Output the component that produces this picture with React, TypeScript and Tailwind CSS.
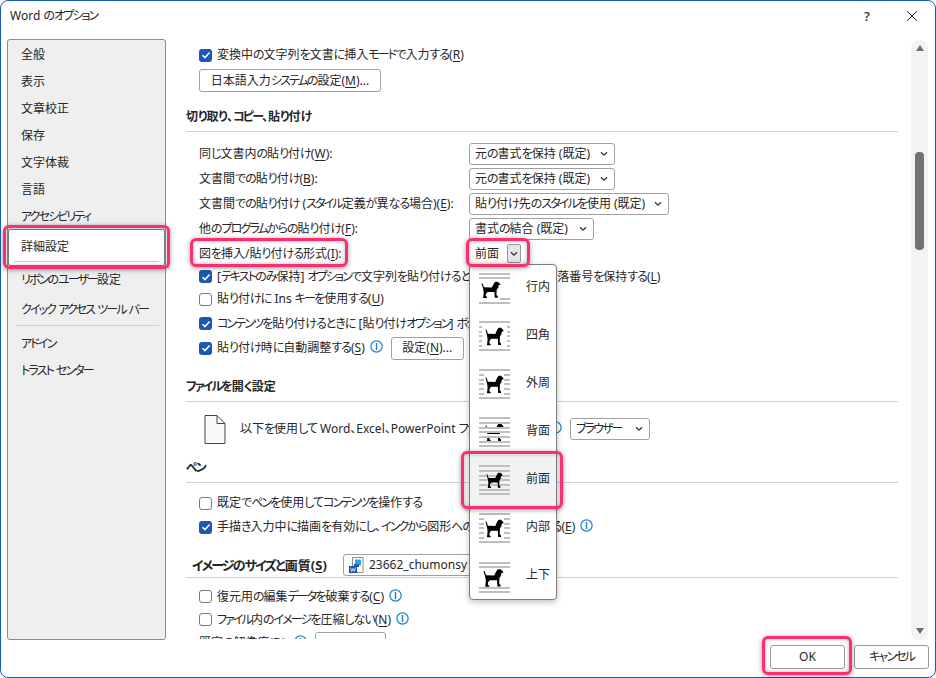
import React from "react";

const U = ({ children }: { children: React.ReactNode }) => <span className="underline underline-offset-2">{children}</span>;

function kern(node: React.ReactNode): React.ReactNode {
  return React.Children.map(node, (c) => {
    if (typeof c === "string") {
      return c.split(/([\u3040-\u309F]+|[\u30A0-\u30FF]+)/).map((part, i) => {
        if (!part) return null;
        if (/^[\u3040-\u309F]/.test(part)) return <span key={i} className="tracking-[-1px]">{part}</span>;
        if (/^[\u30A0-\u30FF]/.test(part)) return <span key={i} className="tracking-[-1.9px]">{part}</span>;
        return <React.Fragment key={i}>{part}</React.Fragment>;
      });
    }
    if (React.isValidElement(c) && c.type === React.Fragment) {
      return kern((c.props as { children?: React.ReactNode }).children);
    }
    return c;
  });
}

const J = ({ children }: { children: React.ReactNode }) => <>{kern(children)}</>;

const Check = ({ on }: { on?: boolean }) =>
  on ? (
    <span className="w-[13px] h-[13px] shrink-0 rounded-[3px] bg-[#1b57b5] flex items-center justify-center">
      <svg width="10" height="10" viewBox="0 0 10 10" fill="none" stroke="#fff" strokeWidth="1.5"><path d="M1.5 5.2 L4 7.6 L8.6 2.6" /></svg>
    </span>
  ) : (
    <span className="w-[13px] h-[13px] shrink-0 rounded-[3px] border border-[#7a7a7a] bg-white" />
  );

const Info = () => (
  <svg width="13" height="13" viewBox="0 0 13 13" fill="none" className="shrink-0 -mt-[3px]">
    <circle cx="6.5" cy="6.5" r="5.6" stroke="#1c7fd1" strokeWidth="1.2" />
    <rect x="5.8" y="3" width="1.4" height="7" fill="#1c7fd1" />
  </svg>
);

const Chevron = () => (
  <svg width="8" height="6" viewBox="0 0 8 6" fill="none" stroke="#333" strokeWidth="1.3"><path d="M1 1.2 L4 4.2 L7 1.2" /></svg>
);

const Select = ({ children, w }: { children: React.ReactNode; w: string }) => (
  <div className={`${w} h-[22px] border border-[#a0a0a0] rounded-[3px] bg-white flex items-center justify-between pl-[5px] pr-[6px] shrink-0`}>
    <span className="whitespace-nowrap"><J>{children}</J></span>
    <Chevron />
  </div>
);

const Btn = ({ children, w }: { children: React.ReactNode; w: string }) => (
  <div className={`${w} h-[23px] border border-[#a0a0a0] rounded-[3px] bg-white flex items-center justify-center shrink-0 whitespace-nowrap`}><span><J>{children}</J></span></div>
);

const Heading = ({ children }: { children: React.ReactNode }) => (
  <div className="h-[28px] border-b border-[#d2d2d2] font-bold flex items-center pb-[2px] whitespace-nowrap"><span><J>{children}</J></span></div>
);

const CheckRow = ({ on, h, children }: { on?: boolean; h: string; children: React.ReactNode }) => (
  <div className={`${h} flex items-center pl-[13px] gap-[5px] whitespace-nowrap`}>
    <Check on={on} />
    <span><J>{children}</J></span>
  </div>
);

const LabelRow = ({ label, h = "h-[25px]", children }: { label: React.ReactNode; h?: string; children?: React.ReactNode }) => (
  <div className={`${h} flex items-center pl-[13px] whitespace-nowrap`}>
    <span className="w-[270px] shrink-0"><J>{label}</J></span>
    {children}
  </div>
);

const DOG = "M0.6 2.5 L1.8 2.5 L3.5 6.6 L12.5 6.8 L14.8 2.8 L16.6 0.8 L19.2 0.8 L21.2 2 L22.8 4 L20.4 4.6 L20 7.2 L18.2 9.4 L18 14.8 L19.6 16.4 L19.6 17.6 L16 17.6 L15.6 11.6 L7.6 11.6 L5.6 13.6 L5.4 15.6 L7 17.2 L7 17.8 L2.4 17.8 L3.2 12 L2.4 8 Z";

const Lines = ({ ys, gap }: { ys: number[]; gap?: (y: number) => [number, number] | null }) => (
  <>
    {ys.map((y) => {
      const g = gap ? gap(y) : null;
      return g ? (
        <g key={y} fill="#bfbfbf">
          <rect x="0" y={y} width={g[0]} height="2" />
          <rect x={g[1]} y={y} width={31 - g[1]} height="2" />
        </g>
      ) : (
        <rect key={y} x="0" y={y} width="31" height="2" fill="#bfbfbf" />
      );
    })}
  </>
);

const FULL = [0, 5, 10, 14, 19, 24, 28];

const WrapIcon = ({ kind }: { kind: string }) => (
  <svg width="31" height="32" viewBox="0 0 31 32" className="shrink-0">
    {kind === "inline" && (
      <>
        <Lines ys={[0, 4, 25, 29]} gap={(y) => (y === 25 ? [0, 21] : null)} />
        <path d={DOG} transform="translate(2 8) scale(0.86 0.95)" fill="#000" />
      </>
    )}
    {kind === "square" && (
      <>
        <Lines ys={FULL} gap={(y) => (y > 2 && y < 26 ? [3, 28] : null)} />
        <path d={DOG} transform="translate(6 6) scale(0.82 1.02)" fill="#000" />
      </>
    )}
    {kind === "tight" && (
      <>
        <Lines ys={FULL} gap={(y) => (y > 2 && y < 26 ? [5, 25] : null)} />
        <path d={DOG} transform="translate(6 6) scale(0.82 1.02)" fill="#000" />
      </>
    )}
    {kind === "behind" && (
      <>
        <path d={DOG} transform="translate(6 6) scale(0.82 1.02)" fill="#000" />
        <rect x="0" y="12" width="31" height="2" fill="#fff" />
        <rect x="0" y="17" width="31" height="2" fill="#fff" />
        <Lines ys={FULL} />
      </>
    )}
    {kind === "front" && (
      <>
        <Lines ys={FULL} />
        <path d={DOG} transform="translate(7 7) scale(0.74 0.9)" fill="#000" stroke="#f2f2f2" strokeWidth="1.2" paintOrder="stroke" />
      </>
    )}
    {kind === "topbottom" && (
      <>
        <Lines ys={[1, 5, 26, 30]} />
        <path d={DOG} transform="translate(4 7.5) scale(0.9 1.02)" fill="#000" />
      </>
    )}
  </svg>
);

const MENU: { kind: string; label: string; active?: boolean }[] = [
  { kind: "inline", label: "行内" },
  { kind: "square", label: "四角" },
  { kind: "tight", label: "外周" },
  { kind: "behind", label: "背面" },
  { kind: "front", label: "前面", active: true },
  { kind: "tight", label: "内部" },
  { kind: "topbottom", label: "上下" },
];

const Callout = ({ cls }: { cls: string }) => (
  <div className={`absolute ${cls} border-[3px] border-[#fb2f70] rounded-[6px] shadow-[0_1px_5px_rgba(0,0,0,0.4),inset_0_0_4px_rgba(0,0,0,0.3)] pointer-events-none`} />
);

const NAV = ["全般", "表示", "文章校正", "保存", "文字体裁", "言語", "アクセシビリティ"];

export default function App() {
  return (
    <div className="relative w-[936px] h-[678px] overflow-hidden bg-white font-['Noto_Sans','Noto_Sans_CJK_JP',sans-serif] text-[12px] leading-none text-[#262626] [font-feature-settings:'palt']">
      <div className="w-full h-full border border-[#1a5db5] rounded-[8px] flex flex-col">
        {/* title bar */}
        <div className="h-[30px] shrink-0 flex items-center pl-[9px]">
          <span className="flex-1"><J>Word のオプション</J></span>
          <span className="w-[14px] text-center text-[13px] mr-[32px] font-medium">?</span>
          <svg width="12" height="12" viewBox="0 0 12 12" stroke="#222" strokeWidth="1" className="mr-[17px]"><path d="M1 1 L11 11 M11 1 L1 11" /></svg>
        </div>
        {/* body */}
        <div className="flex-1 flex min-h-0 pt-[8px]">
          {/* sidebar */}
          <div className="ml-[6px] w-[159px] h-[601px] shrink-0 bg-[#efefef] border border-[#8c8c8c] rounded-[3px] pl-[13px] pt-[1px] flex flex-col overflow-hidden">
            {NAV.map((n) => (
              <div key={n} className="h-[27px] flex items-center shrink-0 whitespace-nowrap"><span><J>{n}</J></span></div>
            ))}
            <div className="-ml-[13px] -mt-[1px] w-[157px] h-[37px] shrink-0 bg-white border border-[#808080] rounded-[2px] pl-[12px] flex flex-col">
              <div className="h-[31px] pt-[2px] flex items-center">詳細設定</div>
              <div className="h-px ml-[-7px] mr-[5px] bg-[#c8c8c8]" />
            </div>
            <div className="h-[28px] flex items-center shrink-0 whitespace-nowrap"><span><J>リボンのユーザー設定</J></span></div>
            <div className="h-[30px] mt-[1px] flex items-center shrink-0 whitespace-nowrap"><span><J>クイック アクセス ツール バー</J></span></div>
            <div className="h-px -ml-[6px] mr-[6px] bg-[#d2d2d2] shrink-0" />
            <div className="h-[27px] mt-[4px] flex items-center shrink-0"><span><J>アドイン</J></span></div>
            <div className="h-[28px] flex items-center shrink-0"><span><J>トラスト センター</J></span></div>
          </div>
          {/* content */}
          <div className="ml-[20px] w-[712px] h-[603px] -mt-[3px] shrink-0 overflow-hidden">
            <div className="pt-[7px]">
              <CheckRow on h="h-[24px]">変換中の文字列を文書に挿入モードで入力する(<U>R</U>)</CheckRow>
              <div className="pl-[13px] mt-[2px]"><Btn w="w-[182px]">日本語入力システムの設定(<U>M</U>)...</Btn></div>
              <div className="mt-[12px]"><Heading>切り取り、コピー、貼り付け</Heading></div>
              <div className="mt-[9px]">
                <LabelRow label={<>同じ文書内の貼り付け(<U>W</U>):</>}><Select w="w-[146px]">元の書式を保持 (既定)</Select></LabelRow>
                <LabelRow label={<>文書間での貼り付け(<U>B</U>):</>}><Select w="w-[146px]">元の書式を保持 (既定)</Select></LabelRow>
                <LabelRow label={<>文書間での貼り付け (スタイル定義が異なる場合)(<U>E</U>):</>}><Select w="w-[200px]">貼り付け先のスタイルを使用 (既定)</Select></LabelRow>
                <LabelRow label={<>他のプログラムからの貼り付け(<U>F</U>):</>}><Select w="w-[125px]">書式の結合 (既定)</Select></LabelRow>
                <LabelRow label={<>図を挿入/貼り付ける形式(<U>I</U>):</>}>
                  <div className="w-[53px] h-[21px] flex items-center justify-between pl-[6px] pr-[1px] shrink-0">
                    <span>前面</span>
                    <span className="w-[14px] h-[19px] border border-[#9a9a9a] rounded-[2px] bg-[#e6e6e6] flex items-center justify-center"><Chevron /></span>
                  </div>
                </LabelRow>
                <CheckRow on h="h-[21px]">[テキストのみ保持] オプションで文字列を貼り付けるときに箇条書きと段落番号を保持する(<U>L</U>)</CheckRow>
                <CheckRow h="h-[24px]">貼り付けに Ins キーを使用する(<U>U</U>)</CheckRow>
                <CheckRow on h="h-[25px]">コンテンツを貼り付けるときに [貼り付けオプション] ボタンを表示する(<U>Y</U>)</CheckRow>
                <div className="h-[24px] flex items-center pl-[13px] gap-[5px] whitespace-nowrap">
                  <Check on />
                  <span><J>貼り付け時に自動調整する(<U>S</U>)</J></span>
                  <Info />
                  <div className="ml-[3px]"><Btn w="w-[73px]">設定(<U>N</U>)...</Btn></div>
                </div>
              </div>
              <div className="mt-[14px]"><Heading>ファイルを開く設定</Heading></div>
              <div className="h-[50px] mt-[2px] flex items-center pl-[18px] whitespace-nowrap">
                <svg width="22" height="29" viewBox="0 0 22 29" fill="#fafafa" stroke="#444" strokeWidth="1" className="shrink-0 mr-[14px]">
                  <path d="M1 0.5 H13 L21 8.5 V28.5 H1 Z M13 0.5 V8.5 H21" />
                </svg>
                <span className="w-[311px] overflow-hidden"><J>以下を使用して Word、Excel、PowerPoint ファイルを開く</J></span>
                <span className="-ml-[2px]"><Info /></span>
                <div className="ml-[8px]"><Select w="w-[80px]">ブラウザー</Select></div>
              </div>
              <div className="mt-[1px]"><Heading>ペン</Heading></div>
              <div className="mt-[8px]">
                <CheckRow h="h-[24px]">既定でペンを使用してコンテンツを操作する</CheckRow>
                <div className="h-[24px] flex items-center pl-[13px] gap-[5px] whitespace-nowrap">
                  <Check on />
                  <span><J>手描き入力中に描画を有効にし、インクから図形への変換を既定にする(<U>E</U>)</J></span>
                  <Info />
                </div>
              </div>
              <div className="mt-[15px] h-[24px] border-b border-[#d2d2d2] flex items-center pl-[6px] font-bold text-[13px] whitespace-nowrap">
                <span className="w-[151px] shrink-0 -mt-[1px]"><J>イメージのサイズと画質(<U>S</U>)</J></span>
                <div className="w-[150px] h-[22px] border border-[#a0a0a0] rounded-[3px] flex items-center pl-[5px] gap-[5px] font-normal text-[12px] -mt-[2px]">
                  <svg width="15" height="16" viewBox="0 0 15 16" className="shrink-0">
                    <path d="M3.5 0.5 H14 V15.5 H3.5 Z" fill="#fff" stroke="#8a8a8a" />
                    <rect x="6" y="2.5" width="6" height="6" fill="#2aa4e8" />
                    <rect x="5" y="7" width="5" height="3" fill="#1a5fb8" />
                    <rect x="0" y="9" width="8" height="7" fill="#1b4fa8" />
                    <path d="M1.5 10.5 L2.7 14.5 L4 11.5 L5.3 14.5 L6.5 10.5" stroke="#fff" strokeWidth="0.8" fill="none" />
                  </svg>
                  <span>23662_chumonsy</span>
                </div>
              </div>
              <div className="mt-[7px]">
                <div className="h-[23px] flex items-center pl-[13px] gap-[5px] whitespace-nowrap">
                  <Check /><span><J>復元用の編集データを破棄する(<U>C</U>)</J></span><Info />
                </div>
                <div className="h-[23px] flex items-center pl-[13px] gap-[5px] whitespace-nowrap">
                  <Check /><span><J>ファイル内のイメージを圧縮しない(<U>N</U>)</J></span><Info />
                </div>
                <div className="h-[23px] flex items-center pl-[13px] gap-[5px] whitespace-nowrap">
                  <span><J>既定の解像度(<U>D</U>):</J></span><Info />
                  <div className="w-[71px] h-[22px] border border-[#a0a0a0] rounded-[3px] ml-[3px]" />
                </div>
              </div>
            </div>
          </div>
          {/* scrollbar */}
          <div className="ml-[13px] w-[17px] h-[600px] mt-[1px] shrink-0 bg-[#f3f3f3] rounded-[8px] flex flex-col items-center">
            <div className="mt-[5px] w-0 h-0 border-x-[4.5px] border-x-transparent border-b-[6px] border-b-[#6e6e6e]" />
            <div className="mt-[101px] w-[9px] h-[98px] rounded-[4px] bg-[#737373]" />
            <div className="mt-[378px] w-0 h-0 border-x-[4.5px] border-x-transparent border-t-[6px] border-t-[#6e6e6e]" />
          </div>
        </div>
        {/* footer */}
        <div className="h-[30px] shrink-0 flex justify-end gap-[9px] pr-[6px] pb-[8px] items-end">
          <div className="w-[75px] h-[24px] border border-[#9a9a9a] rounded-[3px] flex items-center justify-center">OK</div>
          <div className="w-[75px] h-[24px] border border-[#9a9a9a] rounded-[3px] flex items-center justify-center"><span><J>キャンセル</J></span></div>
        </div>
      </div>

      {/* dropdown menu */}
      <div className="absolute left-[469px] top-[264px] w-[88px] h-[336px] bg-white border border-[#7d7d7d] rounded-[4px] shadow-[0_2px_6px_rgba(0,0,0,0.25)] overflow-hidden">
        <div className="-mt-[2px]">
          {MENU.map((m) => (
            <div key={m.label} className={`h-[48px] flex items-start pl-[9px] pt-[10px] ${m.active ? "bg-[#f2f2f2]" : ""}`}>
              <WrapIcon kind={m.kind} />
              <span className="ml-[16px] mt-[8px]">{m.label}</span>
            </div>
          ))}
        </div>
      </div>

      {/* callouts */}
      <Callout cls="left-[3px] top-[225px] w-[167px] h-[44px]" />
      <Callout cls="left-[190px] top-[238px] w-[158px] h-[29px]" />
      <Callout cls="left-[466px] top-[238px] w-[64px] h-[29px]" />
      <Callout cls="left-[461px] top-[451px] w-[102px] h-[58px]" />
      <Callout cls="left-[762px] top-[636px] w-[90px] h-[39px]" />
    </div>
  );
}
